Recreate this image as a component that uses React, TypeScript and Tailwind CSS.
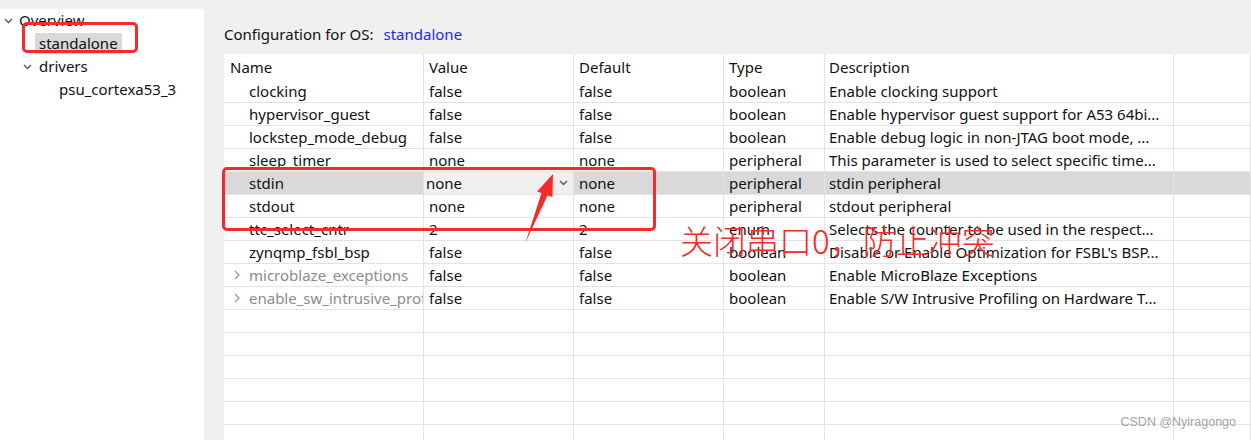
import React from "react"

type Row = {
    name: string
    value: string
    def: string
    type: string
    desc: string
    expandable?: boolean
    combo?: boolean
    selected?: boolean
}

const rows: Row[] = [
    { name: "clocking", value: "false", def: "false", type: "boolean", desc: "Enable clocking support" },
    { name: "hypervisor_guest", value: "false", def: "false", type: "boolean", desc: "Enable hypervisor guest support for A53 64bi..." },
    { name: "lockstep_mode_debug", value: "false", def: "false", type: "boolean", desc: "Enable debug logic in non-JTAG boot mode, ..." },
    { name: "sleep_timer", value: "none", def: "none", type: "peripheral", desc: "This parameter is used to select specific time..." },
    { name: "stdin", value: "none", def: "none", type: "peripheral", desc: "stdin peripheral", combo: true, selected: true },
    { name: "stdout", value: "none", def: "none", type: "peripheral", desc: "stdout peripheral" },
    { name: "ttc_select_cntr", value: "2", def: "2", type: "enum", desc: "Selects the counter to be used in the respect..." },
    { name: "zynqmp_fsbl_bsp", value: "false", def: "false", type: "boolean", desc: "Disable or Enable Optimization for FSBL's BSP..." },
    { name: "microblaze_exceptions", value: "false", def: "false", type: "boolean", desc: "Enable MicroBlaze Exceptions", expandable: true },
    { name: "enable_sw_intrusive_profiling", value: "false", def: "false", type: "boolean", desc: "Enable S/W Intrusive Profiling on Hardware T...", expandable: true },
]

const cols = "grid grid-cols-[200px_150px_150px_101px_349px_1fr] shrink-0"
const cell = "border-r border-[#e3e3e3] overflow-hidden whitespace-nowrap flex items-center"

function ChevronDown({ className }: { className?: string }) {
    return (
        <svg className={className} width="9" height="6" viewBox="0 0 9 6" fill="none">
            <path d="M1 1l3.5 3.5L8 1" stroke="#555" strokeWidth="1.3" />
        </svg>
    )
}

function ChevronRight() {
    return (
        <svg width="8" height="10" viewBox="0 0 8 10" fill="none" className="mr-[8px] shrink-0">
            <path d="M2 1l4 4-4 4" stroke="#9a9a9a" strokeWidth="1.3" />
        </svg>
    )
}

export default function App() {
    return (
        <div className="relative w-[1251px] h-[440px] overflow-hidden flex bg-[#f0f0f0] text-[15px] text-[#111] font-['Noto_Sans',sans-serif]">
            {/* tree */}
            <aside className="w-[204px] mt-[9px] bg-white flex flex-col leading-[23px]">
                <div className="h-[23px] flex items-center">
                    <ChevronDown className="ml-[4px] mr-[6px]" />
                    <span>Overview</span>
                </div>
                <div className="h-[23px] flex items-center pl-[35px]">
                    <span className="bg-[#d9d9d9] px-[4px] h-[21px] flex items-center">standalone</span>
                </div>
                <div className="h-[23px] flex items-center">
                    <ChevronDown className="ml-[23px] mr-[7px]" />
                    <span>drivers</span>
                </div>
                <div className="h-[23px] flex items-center pl-[59px]">psu_cortexa53_3</div>
            </aside>

            {/* config */}
            <main className="flex-1 flex flex-col pl-[20px] min-h-0">
                <div className="h-[54px] shrink-0 flex items-center pt-[14px] gap-[10px]">
                    <span>Configuration for OS:</span>
                    <span className="text-[#1f1fff]">standalone</span>
                </div>
                <div className="flex-1 min-h-0 overflow-hidden bg-white flex flex-col">
                    <div className={`${cols} h-[26px]`}>
                        <div className={`${cell} pl-[6px]`}>Name</div>
                        <div className={`${cell} pl-[5px]`}>Value</div>
                        <div className={`${cell} pl-[5px]`}>Default</div>
                        <div className={`${cell} pl-[5px]`}>Type</div>
                        <div className={`${cell} pl-[4px]`}>Description</div>
                        <div className={cell}></div>
                    </div>
                    {rows.map((r) => (
                        <div
                            key={r.name}
                            className={`${cols} h-[23px] border-b border-[#e3e3e3] ${r.selected ? "bg-[#d9d9d9]" : ""}`}
                        >
                            <div className={`${cell} ${r.expandable ? "pl-[9px] text-[#8c8c8c]" : "pl-[25px]"}`}>
                                {r.expandable && <ChevronRight />}
                                <span>{r.name}</span>
                            </div>
                            {r.combo ? (
                                <div className={`${cell} bg-[#f0f0f0] pl-[2px] justify-between`}>
                                    <span>{r.value}</span>
                                    <span className="w-[21px] h-full border-l border-[#fafafa] flex items-center justify-center">
                                        <ChevronDown />
                                    </span>
                                </div>
                            ) : (
                                <div className={`${cell} pl-[5px]`}>{r.value}</div>
                            )}
                            <div className={`${cell} pl-[5px]`}>{r.def}</div>
                            <div className={`${cell} pl-[5px]`}>{r.type}</div>
                            <div className={`${cell} pl-[4px]`}>{r.desc}</div>
                            <div className={cell}></div>
                        </div>
                    ))}
                    {Array.from({ length: 6 }).map((_, i) => (
                        <div key={i} className={`${cols} h-[23px] border-b border-[#e3e3e3]`}>
                            <div className={cell}></div>
                            <div className={cell}></div>
                            <div className={cell}></div>
                            <div className={cell}></div>
                            <div className={cell}></div>
                            <div className={cell}></div>
                        </div>
                    ))}
                </div>
            </main>

            {/* annotations */}
            <div className="absolute left-[22px] top-[22px] w-[116px] h-[31px] border-[3px] border-[#f52a2a] rounded-[5px]" />
            <div className="absolute left-[222px] top-[167px] w-[434px] h-[64px] border-[3px] border-[#f52a2a] rounded-[5px]" />
            <svg className="absolute left-0 top-0 pointer-events-none" width="1251" height="440">
                <polygon
                    points="553,174 552.5,197 547.5,195.5 525.5,242.5 541.5,193 537,191.5"
                    fill="#f52a2a"
                />
            </svg>
            <div className="absolute left-[680px] top-[224px] text-[33px] leading-[33px] font-light text-[#f52a2a] font-['Noto_Sans_CJK_SC',sans-serif] whitespace-nowrap">
                关闭串口0，防止冲突
            </div>
            <div className="absolute right-[15px] top-[413px] text-[12.5px] leading-[18px] text-[#a3a3a3] font-['Liberation_Sans',sans-serif]">
                CSDN @Nyiragongo
            </div>
        </div>
    )
}
